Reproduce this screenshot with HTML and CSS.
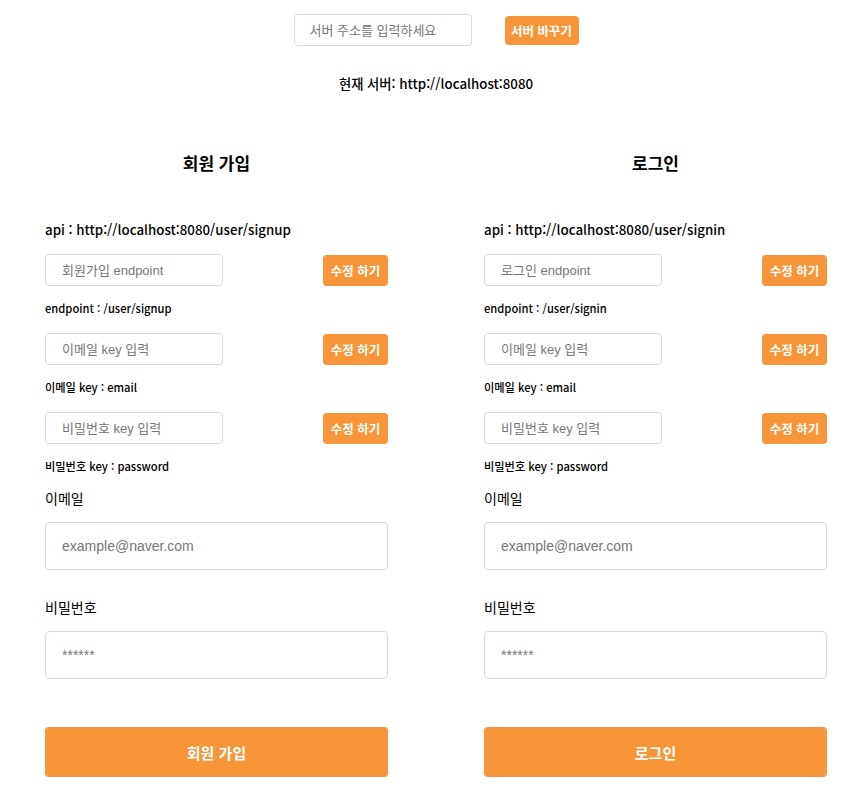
FILE: index.html
```html
<!DOCTYPE html>
<html lang="ko">

<head>
    <meta charset="UTF-8">
    <meta name="viewport" content="width=device-width, initial-scale=1.0">
    <title>API 테스트</title>
    <link rel="stylesheet" href="styles.css">
</head>

<body>
    <div class="page">
        <!-- 서버 주소 변경 -->
        <div class="server-bar">
            <input type="text" class="server-input" placeholder="서버 주소를 입력하세요">
            <button class="small-btn server-btn">서버 바꾸기</button>
        </div>
        <p class="current-server">현재 서버: http://localhost:8080</p>

        <div class="columns">
            <!-- 회원 가입 -->
            <section class="panel">
                <h2 class="panel-title">회원 가입</h2>
                <p class="api-url">api : http://localhost:8080/user/signup</p>

                <div class="key-row">
                    <input type="text" class="key-input" placeholder="회원가입 endpoint">
                    <button class="small-btn">수정 하기</button>
                </div>
                <p class="key-label">endpoint : /user/signup</p>

                <div class="key-row">
                    <input type="text" class="key-input" placeholder="이메일 key 입력">
                    <button class="small-btn">수정 하기</button>
                </div>
                <p class="key-label">이메일 key : email</p>

                <div class="key-row">
                    <input type="text" class="key-input" placeholder="비밀번호 key 입력">
                    <button class="small-btn">수정 하기</button>
                </div>
                <p class="key-label">비밀번호 key : password</p>

                <label class="field-label">이메일</label>
                <input type="text" class="field" placeholder="example@naver.com">

                <label class="field-label pw-label">비밀번호</label>
                <input type="password" class="field" placeholder="******">

                <button class="submit-btn">회원 가입</button>
            </section>

            <!-- 로그인 -->
            <section class="panel">
                <h2 class="panel-title">로그인</h2>
                <p class="api-url">api : http://localhost:8080/user/signin</p>

                <div class="key-row">
                    <input type="text" class="key-input" placeholder="로그인 endpoint">
                    <button class="small-btn">수정 하기</button>
                </div>
                <p class="key-label">endpoint : /user/signin</p>

                <div class="key-row">
                    <input type="text" class="key-input" placeholder="이메일 key 입력">
                    <button class="small-btn">수정 하기</button>
                </div>
                <p class="key-label">이메일 key : email</p>

                <div class="key-row">
                    <input type="text" class="key-input" placeholder="비밀번호 key 입력">
                    <button class="small-btn">수정 하기</button>
                </div>
                <p class="key-label">비밀번호 key : password</p>

                <label class="field-label">이메일</label>
                <input type="text" class="field" placeholder="example@naver.com">

                <label class="field-label pw-label">비밀번호</label>
                <input type="password" class="field" placeholder="******">

                <button class="submit-btn">로그인</button>
            </section>
        </div>
    </div>
</body>

</html>
```

FILE: styles.css
```css
body {
    font-family: "Noto Sans CJK KR", "Noto Sans", sans-serif;
    margin: 0;
    padding: 0;
    background-color: #ffffff;
    color: #000;
}

.page {
    width: 782px;
    margin-left: 45px;
    padding-top: 14px;
}

.server-bar {
    display: flex;
    justify-content: center;
    align-items: center;
    gap: 33px;
    height: 32px;
}

input {
    box-sizing: border-box;
    border: 1px solid #dadada;
    border-radius: 4px;
    background: #fff;
    outline: none;
    font-family: "Liberation Sans", "Noto Sans CJK KR", sans-serif;
    color: #333;
}

input::placeholder {
    color: #777;
}

.server-input {
    width: 178px;
    height: 32px;
    padding: 0 15px;
    font-size: 13px;
}

.small-btn {
    background-color: #f6953a;
    color: #fff;
    border: none;
    border-radius: 4px;
    font-family: "Noto Sans CJK KR", sans-serif;
    font-weight: 700;
    font-size: 12.5px;
    height: 31px;
    width: 65px;
    padding: 0;
    cursor: pointer;
}

.server-btn {
    width: 74px;
    height: 29px;
}

.current-server {
    text-align: center;
    font-size: 13.3px;
    font-weight: 500;
    line-height: 19px;
    margin: 28px 0 0;
}

.columns {
    display: flex;
    justify-content: space-between;
    margin-top: 58px;
}

.panel {
    width: 343px;
    display: flex;
    flex-direction: column;
}

.panel-title {
    text-align: center;
    font-size: 17px;
    font-weight: 700;
    line-height: 24px;
    margin: 0 0 45px;
}

.api-url {
    font-size: 13.3px;
    font-weight: 500;
    line-height: 19px;
    margin: 0 0 15px;
}

.key-row {
    display: flex;
    justify-content: space-between;
    align-items: center;
    height: 32px;
}

.key-input {
    width: 178px;
    height: 32px;
    padding: 0 16px;
    font-size: 13px;
}

.key-label {
    font-size: 11.2px;
    font-weight: 500;
    line-height: 16px;
    margin: 14px 0 17px;
}

.field-label {
    font-size: 14px;
    line-height: 20px;
    margin-top: -3px;
    margin-bottom: 14px;
}

.pw-label {
    margin-top: 27px;
}

.field {
    width: 100%;
    height: 48px;
    padding: 0 16px;
    font-size: 14px;
}

.submit-btn {
    margin-top: 48px;
    height: 50px;
    width: 100%;
    background-color: #f6953a;
    color: #fff;
    border: none;
    border-radius: 4px;
    font-family: "Noto Sans CJK KR", sans-serif;
    font-size: 15px;
    font-weight: 700;
    cursor: pointer;
}
```
